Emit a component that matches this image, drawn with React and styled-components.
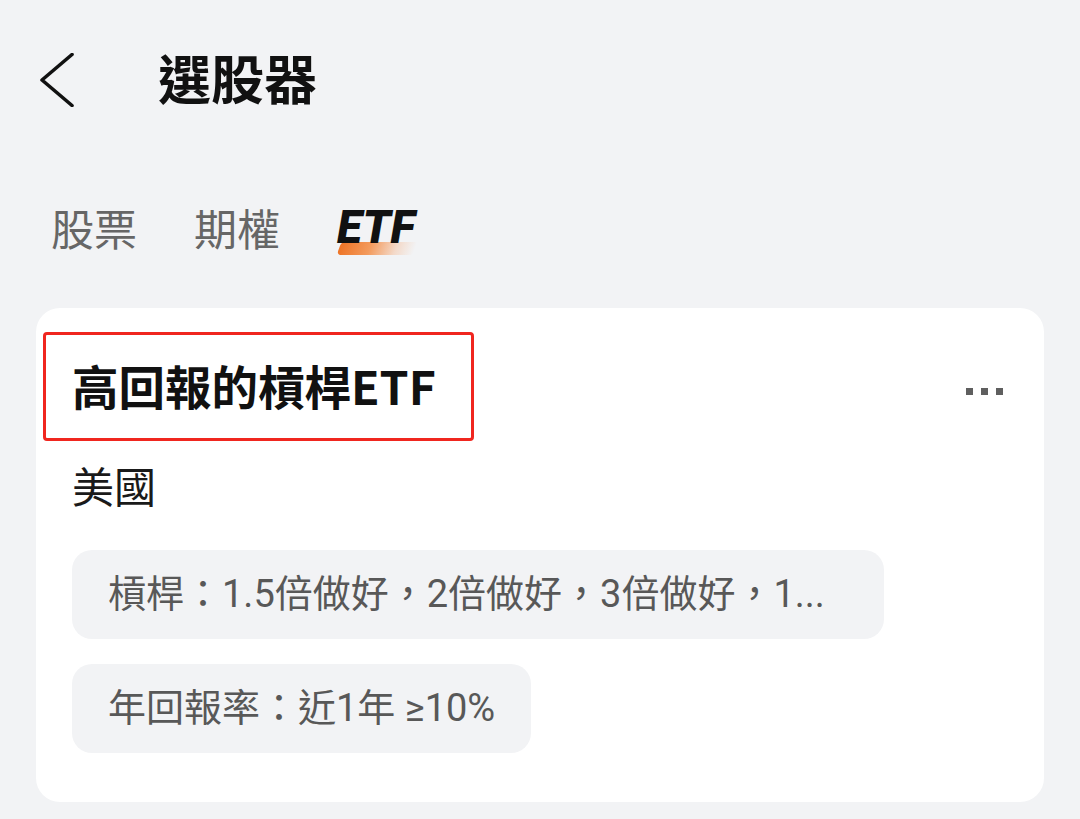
import React from "react";
import styled, { createGlobalStyle } from "styled-components";

const Global = createGlobalStyle`
  html, body { margin: 0; padding: 0; background: #f2f3f5; }
  body { font-family: "Noto Sans CJK TC", "Noto Sans", sans-serif; -webkit-font-smoothing: antialiased; }
  * { box-sizing: border-box; }
`;

const Page = styled.div`
  width: 1080px;
  min-height: 819px;
  background: #f2f3f5;
  display: flex;
  flex-direction: column;
`;

const Header = styled.header`
  height: 160px;
  display: flex;
  align-items: center;
  padding-left: 40px;
`;

const BackButton = styled.button`
  border: 0;
  background: none;
  padding: 0;
  width: 34px;
  height: 54px;
  display: flex;
  align-items: center;
  justify-content: center;
  cursor: pointer;
`;

const PageTitle = styled.h1`
  margin: 0 0 6px 84px;
  font-size: 53px;
  line-height: 60px;
  font-weight: 700;
  color: #111;
  letter-spacing: 0;
`;

const Tabs = styled.nav`
  height: 100px;
  margin-top: 17px;
  display: flex;
  align-items: center;
  gap: 57px;
  padding-left: 51px;
`;

const Tab = styled.div`
  position: relative;
  font-size: 43px;
  line-height: 50px;
  color: #666;
  font-weight: 400;
`;

const ActiveTab = styled.div`
  position: relative;
  font-family: Roboto, "Noto Sans", sans-serif;
  font-size: 46px;
  line-height: 50px;
  font-weight: 900;
  font-style: italic;
  color: #111;
  z-index: 0;
  &::after {
    content: "";
    position: absolute;
    left: 2px;
    width: 76px;
    bottom: -3px;
    height: 13px;
    transform: skewX(-20deg);
    border-radius: 4px 2px 2px 4px;
    background: linear-gradient(90deg, #ee7426 0%, #f39a5c 40%, rgba(246, 170, 120, 0.35) 75%, rgba(246, 180, 140, 0) 100%);
    z-index: -1;
  }
`;

const Card = styled.section`
  margin: 31px 36px 0;
  background: #fff;
  border-radius: 24px;
  padding: 22px 41px 49px 36px;
  display: flex;
  flex-direction: column;
`;

const CardHead = styled.div`
  height: 110px;
  display: flex;
  align-items: center;
  justify-content: space-between;
`;

const CardTitle = styled.h2`
  position: relative;
  margin: 0;
  font-size: 46.5px;
  line-height: 54px;
  font-weight: 700;
  color: #111;
  &::before {
    content: "";
    position: absolute;
    left: -29px;
    right: -38px;
    top: -26px;
    bottom: -29px;
    border: 3px solid #f0261f;
    border-radius: 4px;
  }
`;

const More = styled.button`
  border: 0;
  background: none;
  padding: 0;
  margin-top: 12px;
  display: flex;
  gap: 8px;
  cursor: pointer;
`;

const Dot = styled.span`
  width: 7px;
  height: 7px;
  background: #5f5f5f;
`;

const Market = styled.div`
  margin-top: 20px;
  font-size: 42px;
  line-height: 50px;
  color: #1a1a1a;
`;

const Chips = styled.div`
  margin-top: 40px;
  display: flex;
  flex-direction: column;
  align-items: flex-start;
  gap: 25px;
`;

const Chip = styled.div`
  width: ${(p) => (p.$width ? `${p.$width}px` : "auto")};
  height: 89px;
  padding: 0 36px;
  border-radius: 20px;
  background: #f2f3f5;
  font-family: Roboto, "Noto Sans CJK TC", sans-serif;
  font-size: 38px;
  line-height: 89px;
  color: #585858;
  white-space: nowrap;
`;

export default function App() {
  return (
    <>
      <Global />
      <Page>
        <Header>
          <BackButton aria-label="返回">
            <svg width="34" height="54" viewBox="0 0 34 54" fill="none">
              <polyline points="32,1.5 2,27 32,52.5" stroke="#111" strokeWidth="3.6" strokeLinecap="round" strokeLinejoin="round" />
            </svg>
          </BackButton>
          <PageTitle>選股器</PageTitle>
        </Header>
        <Tabs>
          <Tab>股票</Tab>
          <Tab>期權</Tab>
          <ActiveTab>ETF</ActiveTab>
        </Tabs>
        <Card>
          <CardHead>
            <CardTitle>高回報的槓桿ETF</CardTitle>
            <More aria-label="更多">
              <Dot />
              <Dot />
              <Dot />
            </More>
          </CardHead>
          <Market>美國</Market>
          <Chips>
            <Chip $width={812}>槓桿：1.5倍做好，2倍做好，3倍做好，1...</Chip>
            <Chip>年回報率：近1年 ≥10%</Chip>
          </Chips>
        </Card>
      </Page>
    </>
  );
}
